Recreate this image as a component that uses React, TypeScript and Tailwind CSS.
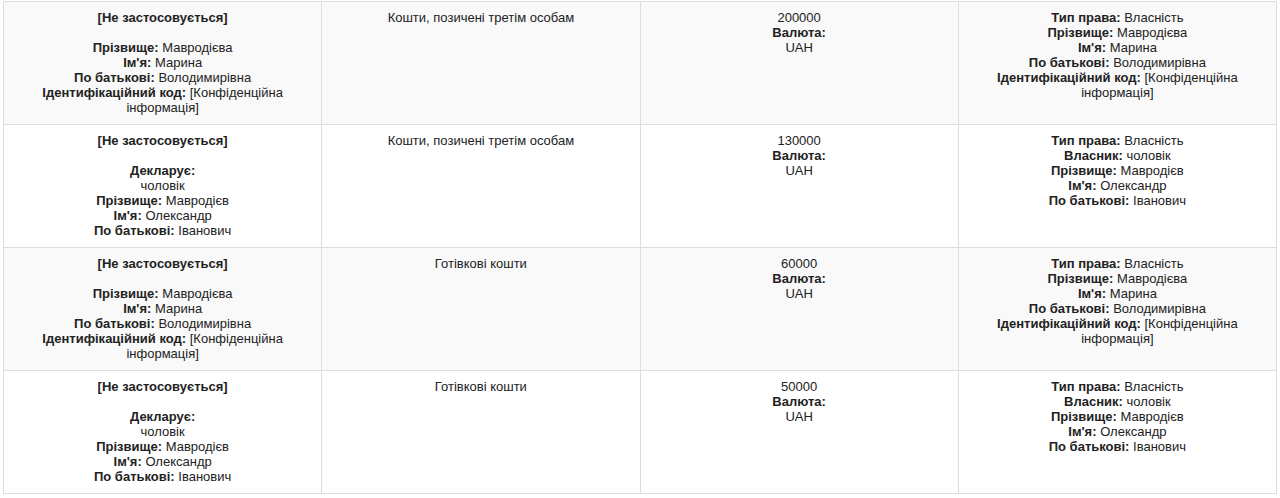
type Field = { label?: string; value?: string; bold?: string; gap?: boolean; block?: boolean };

type Row = {
  person: Field[];
  kind: string;
  amount: string;
  owner: Field[];
};

const marina: Field[] = [
  { bold: "[Не застосовується]" },
  { gap: true },
  { label: "Прізвище:", value: "Мавродієва" },
  { label: "Ім'я:", value: "Марина" },
  { label: "По батькові:", value: "Володимирівна" },
  { label: "Ідентифікаційний код:", value: "[Конфіденційна інформація]" },
];

const oleksandr: Field[] = [
  { bold: "[Не застосовується]" },
  { gap: true },
  { label: "Декларує:", value: "чоловік", block: true },
  { label: "Прізвище:", value: "Мавродієв" },
  { label: "Ім'я:", value: "Олександр" },
  { label: "По батькові:", value: "Іванович" },
];

const ownerMarina: Field[] = [
  { label: "Тип права:", value: "Власність" },
  { label: "Прізвище:", value: "Мавродієва" },
  { label: "Ім'я:", value: "Марина" },
  { label: "По батькові:", value: "Володимирівна" },
  { label: "Ідентифікаційний код:", value: "[Конфіденційна інформація]" },
];

const ownerOleksandr: Field[] = [
  { label: "Тип права:", value: "Власність" },
  { label: "Власник:", value: "чоловік" },
  { label: "Прізвище:", value: "Мавродієв" },
  { label: "Ім'я:", value: "Олександр" },
  { label: "По батькові:", value: "Іванович" },
];

const rows: Row[] = [
  { person: marina, kind: "Кошти, позичені третім особам", amount: "200000", owner: ownerMarina },
  { person: oleksandr, kind: "Кошти, позичені третім особам", amount: "130000", owner: ownerOleksandr },
  { person: marina, kind: "Готівкові кошти", amount: "60000", owner: ownerMarina },
  { person: oleksandr, kind: "Готівкові кошти", amount: "50000", owner: ownerOleksandr },
];

function Fields({ items }: { items: Field[] }) {
  return (
    <>
      {items.map((pItem, i) => {
        if (pItem.gap) return <div key={i} className="h-[15px]" />;
        if (pItem.bold) {
          return (
            <div key={i} className="font-bold">
              {pItem.bold}
            </div>
          );
        }
        if (pItem.block) {
          return (
            <div key={i}>
              <div className="font-bold">{pItem.label}</div>
              <div>{pItem.value}</div>
            </div>
          );
        }
        return (
          <div key={i}>
            <span className="font-bold">{pItem.label}</span> {pItem.value}
          </div>
        );
      })}
    </>
  );
}

export default function App() {
  return (
    <div
      className="bg-white px-[3px] pt-px text-[13px] leading-[15px] text-[#222]"
      style={{ fontFamily: '"Liberation Sans", Arial, sans-serif' }}
    >
      <table className="w-full table-fixed border-collapse">
        <tbody>
          {rows.map((pRow, i) => (
            <tr key={i} className={i % 2 === 0 ? "bg-[#f9f9f9]" : "bg-white"}>
              <td className="border border-[#dddddd] px-[8px] pt-[8px] pb-[9px] text-center align-top">
                <Fields items={pRow.person} />
              </td>
              <td className="border border-[#dddddd] px-[8px] pt-[8px] pb-[9px] text-center align-top">{pRow.kind}</td>
              <td className="border border-[#dddddd] px-[8px] pt-[8px] pb-[9px] text-center align-top">
                <div>{pRow.amount}</div>
                <div className="font-bold">Валюта:</div>
                <div>UAH</div>
              </td>
              <td className="border border-[#dddddd] px-[8px] pt-[8px] pb-[9px] text-center align-top">
                <Fields items={pRow.owner} />
              </td>
            </tr>
          ))}
        </tbody>
      </table>
    </div>
  );
}
